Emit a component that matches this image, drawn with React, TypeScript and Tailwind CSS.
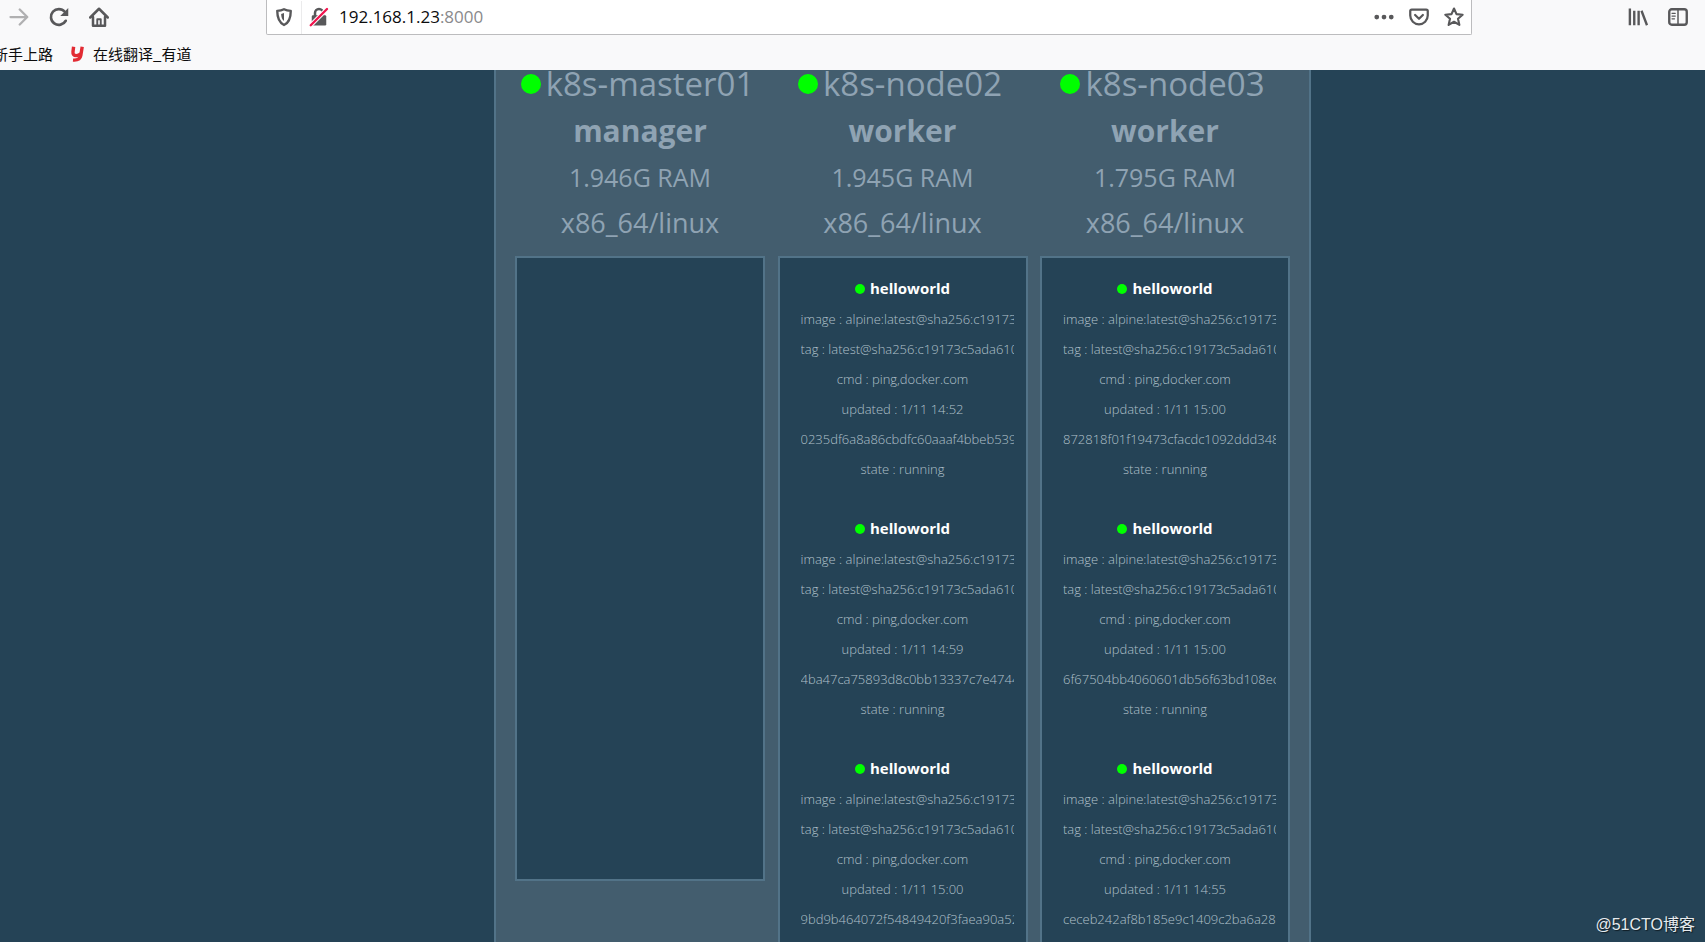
import type { ReactNode } from "react";

interface ITask {
  service: string;
  updated: string;
  container: string;
}

interface INode {
  name: string;
  role: string;
  ram: string;
  tasks: ITask[];
}

const nodes: INode[] = [
  { name: "k8s-master01", role: "manager", ram: "1.946G RAM", tasks: [] },
  {
    name: "k8s-node02",
    role: "worker",
    ram: "1.945G RAM",
    tasks: [
      { service: "helloworld", updated: "1/11 14:52", container: "0235df6a8a86cbdfc60aaaf4bbeb539" },
      { service: "helloworld", updated: "1/11 14:59", container: "4ba47ca75893d8c0bb13337c7e4744" },
      { service: "helloworld", updated: "1/11 15:00", container: "9bd9b464072f54849420f3faea90a52" },
    ],
  },
  {
    name: "k8s-node03",
    role: "worker",
    ram: "1.795G RAM",
    tasks: [
      { service: "helloworld", updated: "1/11 15:00", container: "872818f01f19473cfacdc1092ddd3485" },
      { service: "helloworld", updated: "1/11 15:00", container: "6f67504bb4060601db56f63bd108ecf" },
      { service: "helloworld", updated: "1/11 14:55", container: "ceceb242af8b185e9c1409c2ba6a283" },
    ],
  },
];

function IconButton({ label, children }: { label: string; children: ReactNode }) {
  return (
    <button type="button" aria-label={label} className="shrink-0 text-[#58585a]">
      <svg viewBox="0 0 16 16" className="w-5 h-5" fill="none" stroke="currentColor" strokeWidth="2" strokeLinecap="round" strokeLinejoin="round">
        {children}
      </svg>
    </button>
  );
}

function Toolbar() {
  return (
    <div className="flex items-start justify-between pl-[9px] pr-[17px] h-[38px]">
      <div className="flex items-center gap-5 h-[34px]">
        <span className="flex opacity-45">
          <IconButton label="Forward">
            <path d="M1.2 8h13.4M8.600 2 14.600 8l-6 6" strokeWidth="1.800" />
          </IconButton>
        </span>
        <IconButton label="Reload">
          <path d="M13.400 11A6.300 6.300 0 1 1 12.600 3.800" strokeWidth="2.100" />
          <path d="M15.400.8v6.400H9z" fill="currentColor" stroke="none" />
        </IconButton>
        <IconButton label="Home">
          <path d="M1 8.400 8 1.400l7 7" />
          <path d="M3.200 8v7h9.600V8" />
          <path d="M6.600 14.500v-4.700h2.800v4.700" strokeWidth="1.500" />
        </IconButton>
      </div>

      <div className="flex items-center grow ml-[157px] mr-[156px] h-[35px] px-[7px] bg-white border border-t-0 border-[#bcbcbe] rounded-b-xs">
        <IconButton label="Tracking protection">
          <path d="M8 1.800c1.800.9 3.600 1.200 5.400 1.300 0 5-.9 9.200-5.400 11.300C3.500 12.300 2.600 8.100 2.600 3.100 4.400 3 6.200 2.700 8 1.800z" strokeWidth="1.900" />
          <path d="M8 4.800v6.400c-1.600-1.200-2.200-3-2.300-5.600z" fill="currentColor" stroke="none" />
        </IconButton>
        <span className="w-px h-[33px] mx-[7px] bg-[#ebebec]" />
        <IconButton label="Connection is not secure">
          <path d="M4.800 7V4.800a3.200 3.200 0 0 1 6.400 0V7" />
          <rect x="2.200" y="6.500" width="11.600" height="8.200" rx="1" fill="currentColor" stroke="none" />
          <path d="M1.400 14.600 14.400 1.600" stroke="#fff" strokeWidth="3.400" />
          <path d="M1.400 14.600 14.400 1.600" stroke="#f0134d" strokeWidth="1.900" />
        </IconButton>
        <label className="flex items-center ml-[10px] font-['Open_Sans',sans-serif] text-[17px] text-[#8a8a8c]">
          <input aria-label="Address" defaultValue="192.168.1.23" className="field-sizing-content text-[#0c0c0d] outline-none" />
          :8000
        </label>
        <div className="flex items-center gap-[15px] ml-auto">
          <IconButton label="Page actions">
            <g fill="currentColor" stroke="none">
              <circle cx="2.200" cy="8" r="1.900" />
              <circle cx="8" cy="8" r="1.900" />
              <circle cx="13.800" cy="8" r="1.900" />
            </g>
          </IconButton>
          <IconButton label="Save to Pocket">
            <path d="M2.200 2h11.600c.7 0 1.200.5 1.200 1.200v3.600a7 7 0 0 1-14 0V3.200C1 2.500 1.500 2 2.200 2z" strokeWidth="1.800" />
            <path d="M4.900 6.400 8 9.400l3.100-3" strokeWidth="1.800" />
          </IconButton>
          <IconButton label="Bookmark this page">
            <path d="m8 1.200 2 4.500 4.900.5-3.700 3.200 1.100 4.900L8 11.800l-4.300 2.500 1.100-4.900L1.100 6.200 6 5.700z" strokeWidth="1.700" />
          </IconButton>
        </div>
      </div>

      <div className="flex items-center gap-5 h-[34px]">
        <IconButton label="Library">
          <path d="M1.500 1.200v13.400M5 3v11.600M8.500 3v11.600M10.800 3l4.400 11.600" strokeWidth="1.900" strokeLinecap="butt" />
        </IconButton>
        <IconButton label="Sidebars">
          <rect x="1" y="1.800" width="14" height="12.400" rx="2" strokeWidth="1.900" />
          <path d="M8 2v12" strokeWidth="1.200" />
          <path d="M3.200 5h2.600M3.200 7.200h2.600M3.200 9.400h2" strokeWidth="1" />
        </IconButton>
      </div>
    </div>
  );
}

function Bookmarks() {
  return (
    <nav className="flex items-center gap-[18px] h-8 -ml-[7px] font-['Noto_Sans_CJK_SC',sans-serif] text-[15px] text-[#0c0c0d] whitespace-nowrap">
      <a href="#start">新手上路</a>
      <a href="#youdao" className="flex items-center gap-[9px]">
        <svg viewBox="0 0 13 16" className="w-[13px] h-4" fill="none" stroke="#e22b33" strokeWidth="3.400">
          <path d="M2.600.8 2 5.800c-.3 2.600.9 3.800 3.200 3.800 2 0 3.600-.9 4.600-2" />
          <path d="M11.200.8 9.800 9.600c-.6 3.400-3 4.900-7.800 4.500" />
        </svg>
        在线翻译_有道
      </a>
    </nav>
  );
}

function Task({ task }: { task: ITask }) {
  return (
    <li className="mb-[29px] text-center text-[13px] leading-[30px] text-[#b0c0ca] font-light whitespace-nowrap">
      <h3 className="flex items-center justify-center gap-[5px] text-[15px] leading-[31px] font-bold text-white">
        <span className="w-[10px] h-[10px] rounded-full bg-[#00ff00]" />
        {task.service}
      </h3>
      <p className="-mr-[9px] overflow-hidden">image : alpine:latest@sha256:c19173c5ada610</p>
      <p className="-mr-[9px] overflow-hidden">tag : latest@sha256:c19173c5ada610df</p>
      <p>cmd : ping,docker.com</p>
      <p>updated : {task.updated}</p>
      <p className="-mr-[9px] overflow-hidden text-left">{task.container}</p>
      <p>state : running</p>
    </li>
  );
}

function Node({ node }: { node: INode }) {
  return (
    <section className="w-[250px] shrink-0">
      <header className="mb-[10px] text-center leading-[46px] text-[#8fa3b3]">
        <h2 className="flex items-center justify-center gap-[5px] mb-[10px] pr-[5px] text-[33px] leading-7">
          <span className="w-5 h-5 rounded-full bg-[#00ff00]" />
          {node.name}
        </h2>
        <p className="text-[30px] leading-[46px] font-bold">{node.role}</p>
        <p className="text-[25px] leading-[46px]">{node.ram}</p>
        <p className="text-[27px] leading-[46px]">x86_64/linux</p>
      </header>
      <ul className="min-h-[625px] px-[21px] pt-[15px] bg-[#254356] border-2 border-[#527388]">
        {node.tasks.map((task) => (
          <Task key={task.container} task={task} />
        ))}
      </ul>
    </section>
  );
}

export default function App() {
  return (
    <div className="relative flex flex-col h-screen overflow-hidden bg-[#254356]">
      <header className="shrink-0 bg-[#f9f9fa]">
        <Toolbar />
        <Bookmarks />
      </header>

      <main className="flex justify-center grow min-h-0 pl-[100px] font-['Open_Sans',sans-serif]">
        <div className="flex items-start justify-between w-[817px] px-[19px] bg-[#435d6e] border-x-2 border-[#527388]">
          {nodes.map((node) => (
            <Node key={node.name} node={node} />
          ))}
        </div>
      </main>

      <p className="absolute right-[10px] bottom-[5px] font-['Liberation_Sans','Noto_Sans_CJK_SC',sans-serif] text-base text-[#e6ebee] text-shadow-[1px_1px_1px_#00000099]">
        @51CTO博客
      </p>
    </div>
  );
}
